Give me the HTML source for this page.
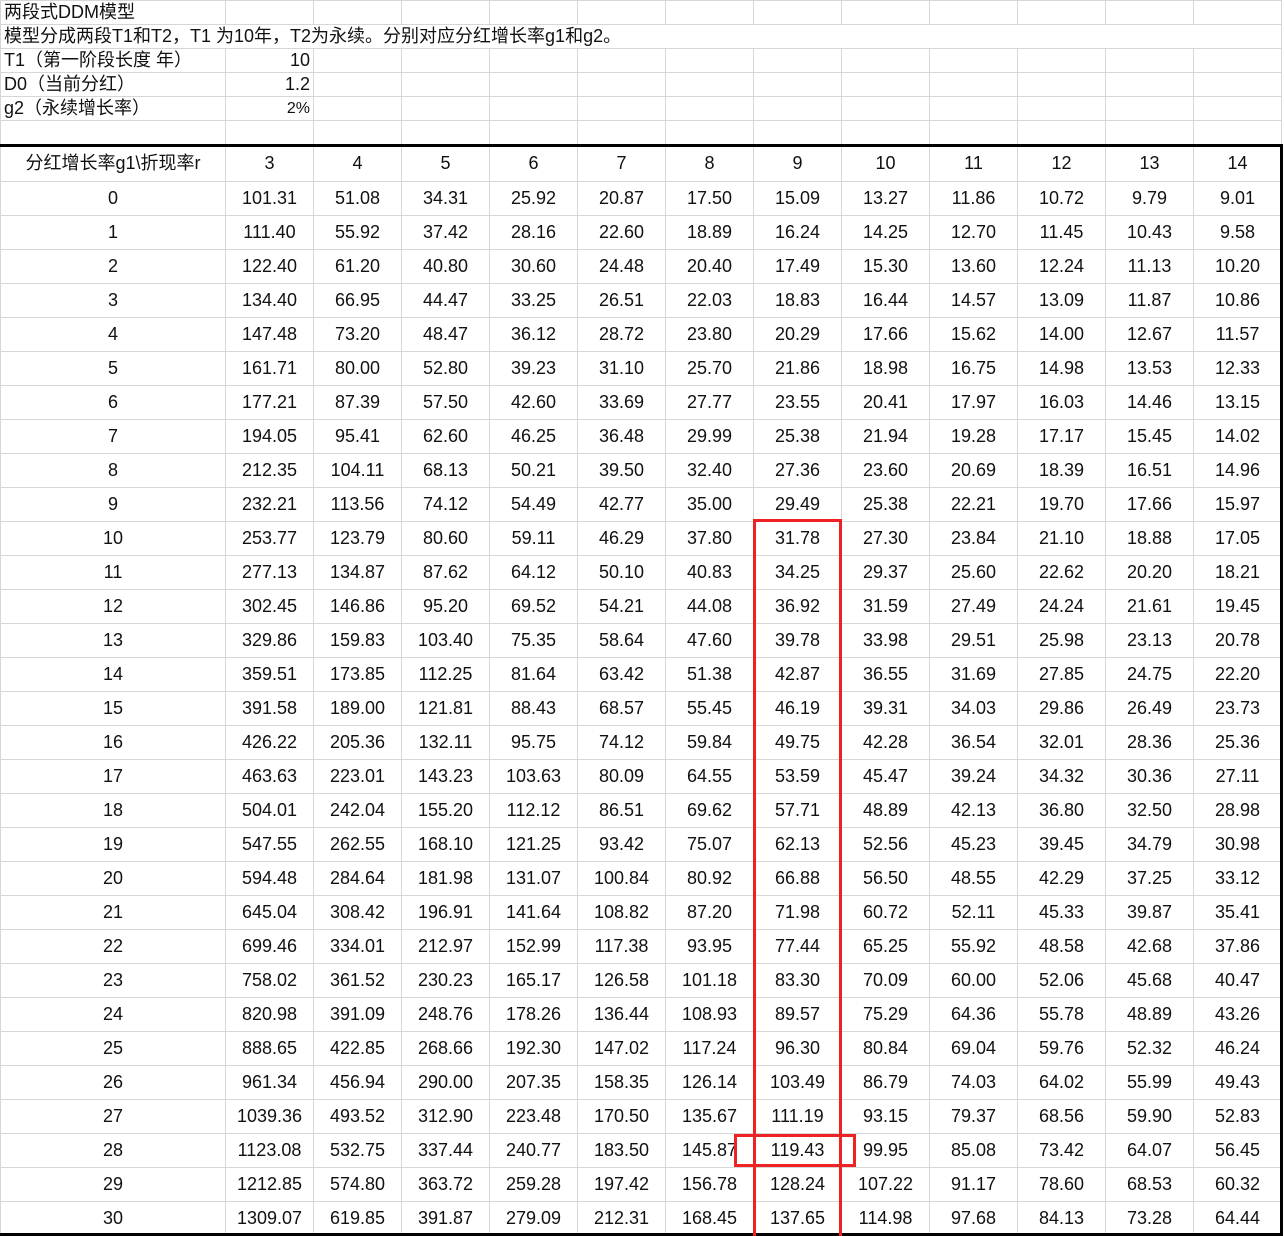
<!DOCTYPE html>
<html><head><meta charset="utf-8"><style>
html,body{margin:0;width:1284px;height:1236px;overflow:hidden}
body{background:#fff;position:relative;font-family:"Liberation Sans","Noto Sans CJK SC",sans-serif;color:#111}
table{border-collapse:collapse;table-layout:fixed;position:absolute;left:0}
td{border:1px solid #d6d6d6;padding:0;font-size:18px;white-space:nowrap;overflow:visible}
#top{top:0}
#top td{height:23px;line-height:23px;padding:0 3px}
#top td.r{text-align:right}
#main{top:145px}
#main td{height:33px;text-align:center;line-height:33px}
#main tr.h td{height:35px}
.box{position:absolute;border:3px solid #ee2222}
</style></head><body>
<table id="top">
<colgroup><col style="width:225px"><col style="width:88px"><col style="width:88px"><col style="width:88px"><col style="width:88px"><col style="width:88px"><col style="width:88px"><col style="width:88px"><col style="width:88px"><col style="width:88px"><col style="width:88px"><col style="width:88px"><col style="width:88px"></colgroup>
<tr><td style="border-right:none">两段式DDM模型</td><td></td><td></td><td></td><td></td><td></td><td></td><td></td><td></td><td></td><td></td><td></td><td></td></tr>
<tr><td colspan="13">模型分成两段T1和T2，T1 为10年，T2为永续。分别对应分红增长率g1和g2。</td></tr>
<tr><td>T1（第一阶段长度 年）</td><td class="r">10</td><td></td><td></td><td></td><td></td><td></td><td></td><td></td><td></td><td></td><td></td><td></td></tr>
<tr><td>D0（当前分红）</td><td class="r">1.2</td><td></td><td></td><td></td><td></td><td></td><td></td><td></td><td></td><td></td><td></td><td></td></tr>
<tr><td>g2（永续增长率）</td><td class="r" style="font-size:16px">2%</td><td></td><td></td><td></td><td></td><td></td><td></td><td></td><td></td><td></td><td></td><td></td></tr>
<tr><td style="height:24px"></td><td></td><td></td><td></td><td></td><td></td><td></td><td></td><td></td><td></td><td></td><td></td><td></td></tr>
</table>
<table id="main">
<colgroup><col style="width:225px"><col style="width:88px"><col style="width:88px"><col style="width:88px"><col style="width:88px"><col style="width:88px"><col style="width:88px"><col style="width:88px"><col style="width:88px"><col style="width:88px"><col style="width:88px"><col style="width:88px"><col style="width:88px"></colgroup>
<tr class="h"><td>分红增长率g1\折现率r</td><td>3</td><td>4</td><td>5</td><td>6</td><td>7</td><td>8</td><td>9</td><td>10</td><td>11</td><td>12</td><td>13</td><td>14</td></tr>
<tr><td>0</td><td>101.31</td><td>51.08</td><td>34.31</td><td>25.92</td><td>20.87</td><td>17.50</td><td>15.09</td><td>13.27</td><td>11.86</td><td>10.72</td><td>9.79</td><td>9.01</td></tr>
<tr><td>1</td><td>111.40</td><td>55.92</td><td>37.42</td><td>28.16</td><td>22.60</td><td>18.89</td><td>16.24</td><td>14.25</td><td>12.70</td><td>11.45</td><td>10.43</td><td>9.58</td></tr>
<tr><td>2</td><td>122.40</td><td>61.20</td><td>40.80</td><td>30.60</td><td>24.48</td><td>20.40</td><td>17.49</td><td>15.30</td><td>13.60</td><td>12.24</td><td>11.13</td><td>10.20</td></tr>
<tr><td>3</td><td>134.40</td><td>66.95</td><td>44.47</td><td>33.25</td><td>26.51</td><td>22.03</td><td>18.83</td><td>16.44</td><td>14.57</td><td>13.09</td><td>11.87</td><td>10.86</td></tr>
<tr><td>4</td><td>147.48</td><td>73.20</td><td>48.47</td><td>36.12</td><td>28.72</td><td>23.80</td><td>20.29</td><td>17.66</td><td>15.62</td><td>14.00</td><td>12.67</td><td>11.57</td></tr>
<tr><td>5</td><td>161.71</td><td>80.00</td><td>52.80</td><td>39.23</td><td>31.10</td><td>25.70</td><td>21.86</td><td>18.98</td><td>16.75</td><td>14.98</td><td>13.53</td><td>12.33</td></tr>
<tr><td>6</td><td>177.21</td><td>87.39</td><td>57.50</td><td>42.60</td><td>33.69</td><td>27.77</td><td>23.55</td><td>20.41</td><td>17.97</td><td>16.03</td><td>14.46</td><td>13.15</td></tr>
<tr><td>7</td><td>194.05</td><td>95.41</td><td>62.60</td><td>46.25</td><td>36.48</td><td>29.99</td><td>25.38</td><td>21.94</td><td>19.28</td><td>17.17</td><td>15.45</td><td>14.02</td></tr>
<tr><td>8</td><td>212.35</td><td>104.11</td><td>68.13</td><td>50.21</td><td>39.50</td><td>32.40</td><td>27.36</td><td>23.60</td><td>20.69</td><td>18.39</td><td>16.51</td><td>14.96</td></tr>
<tr><td>9</td><td>232.21</td><td>113.56</td><td>74.12</td><td>54.49</td><td>42.77</td><td>35.00</td><td>29.49</td><td>25.38</td><td>22.21</td><td>19.70</td><td>17.66</td><td>15.97</td></tr>
<tr><td>10</td><td>253.77</td><td>123.79</td><td>80.60</td><td>59.11</td><td>46.29</td><td>37.80</td><td>31.78</td><td>27.30</td><td>23.84</td><td>21.10</td><td>18.88</td><td>17.05</td></tr>
<tr><td>11</td><td>277.13</td><td>134.87</td><td>87.62</td><td>64.12</td><td>50.10</td><td>40.83</td><td>34.25</td><td>29.37</td><td>25.60</td><td>22.62</td><td>20.20</td><td>18.21</td></tr>
<tr><td>12</td><td>302.45</td><td>146.86</td><td>95.20</td><td>69.52</td><td>54.21</td><td>44.08</td><td>36.92</td><td>31.59</td><td>27.49</td><td>24.24</td><td>21.61</td><td>19.45</td></tr>
<tr><td>13</td><td>329.86</td><td>159.83</td><td>103.40</td><td>75.35</td><td>58.64</td><td>47.60</td><td>39.78</td><td>33.98</td><td>29.51</td><td>25.98</td><td>23.13</td><td>20.78</td></tr>
<tr><td>14</td><td>359.51</td><td>173.85</td><td>112.25</td><td>81.64</td><td>63.42</td><td>51.38</td><td>42.87</td><td>36.55</td><td>31.69</td><td>27.85</td><td>24.75</td><td>22.20</td></tr>
<tr><td>15</td><td>391.58</td><td>189.00</td><td>121.81</td><td>88.43</td><td>68.57</td><td>55.45</td><td>46.19</td><td>39.31</td><td>34.03</td><td>29.86</td><td>26.49</td><td>23.73</td></tr>
<tr><td>16</td><td>426.22</td><td>205.36</td><td>132.11</td><td>95.75</td><td>74.12</td><td>59.84</td><td>49.75</td><td>42.28</td><td>36.54</td><td>32.01</td><td>28.36</td><td>25.36</td></tr>
<tr><td>17</td><td>463.63</td><td>223.01</td><td>143.23</td><td>103.63</td><td>80.09</td><td>64.55</td><td>53.59</td><td>45.47</td><td>39.24</td><td>34.32</td><td>30.36</td><td>27.11</td></tr>
<tr><td>18</td><td>504.01</td><td>242.04</td><td>155.20</td><td>112.12</td><td>86.51</td><td>69.62</td><td>57.71</td><td>48.89</td><td>42.13</td><td>36.80</td><td>32.50</td><td>28.98</td></tr>
<tr><td>19</td><td>547.55</td><td>262.55</td><td>168.10</td><td>121.25</td><td>93.42</td><td>75.07</td><td>62.13</td><td>52.56</td><td>45.23</td><td>39.45</td><td>34.79</td><td>30.98</td></tr>
<tr><td>20</td><td>594.48</td><td>284.64</td><td>181.98</td><td>131.07</td><td>100.84</td><td>80.92</td><td>66.88</td><td>56.50</td><td>48.55</td><td>42.29</td><td>37.25</td><td>33.12</td></tr>
<tr><td>21</td><td>645.04</td><td>308.42</td><td>196.91</td><td>141.64</td><td>108.82</td><td>87.20</td><td>71.98</td><td>60.72</td><td>52.11</td><td>45.33</td><td>39.87</td><td>35.41</td></tr>
<tr><td>22</td><td>699.46</td><td>334.01</td><td>212.97</td><td>152.99</td><td>117.38</td><td>93.95</td><td>77.44</td><td>65.25</td><td>55.92</td><td>48.58</td><td>42.68</td><td>37.86</td></tr>
<tr><td>23</td><td>758.02</td><td>361.52</td><td>230.23</td><td>165.17</td><td>126.58</td><td>101.18</td><td>83.30</td><td>70.09</td><td>60.00</td><td>52.06</td><td>45.68</td><td>40.47</td></tr>
<tr><td>24</td><td>820.98</td><td>391.09</td><td>248.76</td><td>178.26</td><td>136.44</td><td>108.93</td><td>89.57</td><td>75.29</td><td>64.36</td><td>55.78</td><td>48.89</td><td>43.26</td></tr>
<tr><td>25</td><td>888.65</td><td>422.85</td><td>268.66</td><td>192.30</td><td>147.02</td><td>117.24</td><td>96.30</td><td>80.84</td><td>69.04</td><td>59.76</td><td>52.32</td><td>46.24</td></tr>
<tr><td>26</td><td>961.34</td><td>456.94</td><td>290.00</td><td>207.35</td><td>158.35</td><td>126.14</td><td>103.49</td><td>86.79</td><td>74.03</td><td>64.02</td><td>55.99</td><td>49.43</td></tr>
<tr><td>27</td><td>1039.36</td><td>493.52</td><td>312.90</td><td>223.48</td><td>170.50</td><td>135.67</td><td>111.19</td><td>93.15</td><td>79.37</td><td>68.56</td><td>59.90</td><td>52.83</td></tr>
<tr><td>28</td><td>1123.08</td><td>532.75</td><td>337.44</td><td>240.77</td><td>183.50</td><td>145.87</td><td>119.43</td><td>99.95</td><td>85.08</td><td>73.42</td><td>64.07</td><td>56.45</td></tr>
<tr><td>29</td><td>1212.85</td><td>574.80</td><td>363.72</td><td>259.28</td><td>197.42</td><td>156.78</td><td>128.24</td><td>107.22</td><td>91.17</td><td>78.60</td><td>68.53</td><td>60.32</td></tr>
<tr><td>30</td><td>1309.07</td><td>619.85</td><td>391.87</td><td>279.09</td><td>212.31</td><td>168.45</td><td>137.65</td><td>114.98</td><td>97.68</td><td>84.13</td><td>73.28</td><td>64.44</td></tr>
</table>
<div style="position:absolute;left:0;top:144px;width:1283px;height:3px;background:#000"></div>
<div style="position:absolute;left:1280px;top:144px;width:3px;height:1092px;background:#000"></div>
<div style="position:absolute;left:0;top:1233px;width:1283px;height:3px;background:#000"></div>
<div class="box" style="left:753px;top:519px;width:83px;height:714px;border-bottom:none"></div>
<div class="box" style="left:734px;top:1134px;width:116px;height:27px"></div>
</body></html>
